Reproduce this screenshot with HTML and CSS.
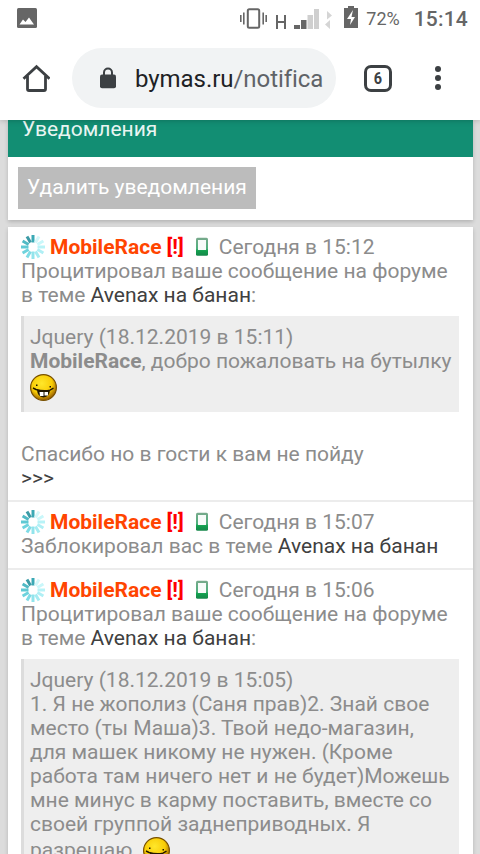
FILE: index.html
```html
<!DOCTYPE html>
<html lang="ru">
<head>
<meta charset="utf-8">
<title>Уведомления</title>
<link rel="stylesheet" href="styles.css">
</head>
<body>
<svg class="defs" width="0" height="0">
  <defs>
    <radialGradient id="face" cx=".43" cy=".34" r=".65"><stop offset="0" stop-color="#ffe72b"/><stop offset=".62" stop-color="#f9cc05"/><stop offset="1" stop-color="#9c6200"/></radialGradient>
    <linearGradient id="phoneFill" x1="0" y1="0" x2="0" y2="1"><stop offset="0" stop-color="#78a98c"/><stop offset=".6" stop-color="#4db07c"/><stop offset=".72" stop-color="#12a04e"/><stop offset="1" stop-color="#16864a"/></linearGradient>
    <symbol id="spinner" viewBox="0 0 24 24">
      <g stroke-width="3" fill="none">
        <path stroke="#3aa9b5" d="M12 0v7.500"/><path stroke="#d3f8fa" d="M18 1.600l-3.500 6"/><path stroke="#c9f7fa" d="M22.400 6l-6 3.500"/><path stroke="#b9f3f7" d="M24 12h-7.500"/><path stroke="#b0eff5" d="M22.400 18l-6-3.500"/><path stroke="#a5ebf1" d="M18 22.400l-3.500-6"/><path stroke="#92e4ec" d="M12 24v-7.500"/><path stroke="#7edbe5" d="M6 22.400l3.500-6"/><path stroke="#6ed3dd" d="M1.600 18l6-3.500"/><path stroke="#60c9d3" d="M0 12h7.500"/><path stroke="#50b9c4" d="M1.600 6l6 3.500"/><path stroke="#3c9ba6" d="M6 1.600l3.500 6"/>
      </g>
    </symbol>
    <symbol id="phone" viewBox="0 0 14 20">
      <rect x="1" y=".8" width="12" height="18" rx="1.500" fill="url(#phoneFill)"/><rect x="3" y="3" width="8" height="10" fill="#f7fbf9"/>
    </symbol>
    <symbol id="smile" viewBox="0 0 27 27">
      <circle cx="13.5" cy="13.5" r="12.9" fill="url(#face)" stroke="#785000" stroke-width="1.2"/>
      <path d="M3 14l3 1.500q7 2 14 .7l3.500-2" fill="none" stroke="#211700" stroke-width="1.400"/><path d="M7 16q7 1.500 13 0-.5 7-6.500 7.500Q7.500 23 7 16z" fill="#211700"/><path d="M9.500 18h4v4h-3.500zM14.500 18h3.500v3.500h-3.500z" fill="#fff"/><path d="M6 10.500h1.500V12H6zM19.500 12H21v1.500h-1.500z" fill="#211700"/>
    </symbol>
  </defs>
</svg>
<div class="screen">
  <header class="chrome">
    <div class="status">
      <svg class="status-icons" width="480" height="36" viewBox="0 0 480 36">
        <rect x="17" y="8" width="20" height="20" rx="1.5" fill="#666"/><path d="M19.500 24.500l3.500-5 2.500 2.500 3.500-4.500 5 7z" fill="#fff"/>
        <g fill="none" stroke="#666" stroke-width="1.6"><rect x="247.800" y="9.200" width="11.400" height="18.600" rx="1.500" stroke-width="2"/><path d="M243.800 12.500v12M240.800 15v7M263.200 12.500v12M266.200 15v7"/></g>
        <path d="M277 15v14M285 15v14M277 22h8" fill="none" stroke="#666" stroke-width="2"/>
        <path d="M294 25h6v4h-6zM301 20h5.500v9H301z" fill="#666"/><path d="M307.500 15h5.500v14h-5.500zM314 9h5v20h-5z" fill="#cfcfcf"/>
        <path d="M327 11l5 4.500h-5zM327 15.500h5l-5 4zM330 20v9l-5-4.500z" fill="#d5d5d5"/>
        <path d="M344 8h4V6h6v2h4v20h-14z" fill="#666"/><path d="M353 10l-6 9h4l-1 6 5-8h-3.500z" fill="#fff"/>
      </svg>
      <span class="battery">72%</span><span class="clock">15:14</span>
    </div>
    <div class="toolbar">
      <svg class="home" width="28" height="28" viewBox="0 0 28 28"><path d="M1.500 14.700L14.500 2.700l13 12M5.500 12v13q0 1.500 1.500 1.500h15q1.500 0 1.500-1.500V12" fill="none" stroke="#3c4043" stroke-width="2.800"/></svg>
      <div class="omnibox">
        <svg width="16" height="22" viewBox="0 0 16 22"><path d="M4 8V5.500a4 4 0 0 1 8 0V8" fill="none" stroke="#3c4043" stroke-width="2"/><rect y="7.500" width="16" height="13.700" rx="2" fill="#3c4043"/></svg>
        <span class="url">bymas.ru<span class="path">/notifica</span></span>
      </div>
      <div class="tabs"><span>6</span></div>
      <svg class="more" width="8" height="26" viewBox="0 0 8 26" fill="#3c4043"><circle cx="4" cy="4" r="3"/><circle cx="4" cy="13" r="3"/><circle cx="4" cy="22" r="3"/></svg>
    </div>
  </header>
  <main class="page">
    <section class="card">
      <h1 class="title"><span>Уведомления</span></h1>
      <div class="actions"><button class="clear">Удалить уведомления</button></div>
    </section>
    <section class="card list">
      <article class="item">
        <div class="line head"><svg class="spin"><use href="#spinner"/></svg><b class="nick">MobileRace</b><b class="mark">[!]</b><svg class="device"><use href="#phone"/></svg><span class="time">Сегодня в 15:12</span></div>
        <div class="line">Процитировал ваше сообщение на форуме</div>
        <div class="line">в теме <a>Avenax на банан</a>:</div>
        <blockquote class="quote">
          <div class="line">Jquery (18.12.2019 в 15:11)</div>
          <div class="line"><b>MobileRace</b>, добро пожаловать на бутылку</div>
          <div class="emoji-line"><svg class="smile"><use href="#smile"/></svg></div>
        </blockquote>
        <div class="reply">
          <div class="line">Спасибо но в гости к вам не пойду</div>
          <div class="line"><a>&gt;&gt;&gt;</a></div>
        </div>
      </article>
      <article class="item">
        <div class="line head"><svg class="spin"><use href="#spinner"/></svg><b class="nick">MobileRace</b><b class="mark">[!]</b><svg class="device"><use href="#phone"/></svg><span class="time">Сегодня в 15:07</span></div>
        <div class="line">Заблокировал вас в теме <a>Avenax на банан</a></div>
      </article>
      <article class="item">
        <div class="line head"><svg class="spin"><use href="#spinner"/></svg><b class="nick">MobileRace</b><b class="mark">[!]</b><svg class="device"><use href="#phone"/></svg><span class="time">Сегодня в 15:06</span></div>
        <div class="line">Процитировал ваше сообщение на форуме</div>
        <div class="line">в теме <a>Avenax на банан</a>:</div>
        <blockquote class="quote">
          <div class="line">Jquery (18.12.2019 в 15:05)</div>
          <div class="line">1. Я не жополиз (Саня прав)2. Знай свое</div>
          <div class="line">место (ты Маша)3. Твой недо-магазин,</div>
          <div class="line">для машек никому не нужен. (Кроме</div>
          <div class="line">работа там ничего нет и не будет)Можешь</div>
          <div class="line">мне минус в карму поставить, вместе со</div>
          <div class="line">своей группой заднеприводных. Я</div>
          <div class="emoji-line"><span class="last">разрешаю.</span><svg class="smile"><use href="#smile"/></svg></div>
        </blockquote>
      </article>
    </section>
  </main>
</div>
</body>
</html>
```
FILE: styles.css
```css
* { box-sizing: border-box; }
body { margin: 0; font-family: Roboto, "Liberation Sans", sans-serif; }
.defs { position: absolute; }
.screen { width: 480px; height: 854px; overflow: hidden; display: flex; flex-direction: column; background: #dcdcdc; }
.chrome { position: relative; z-index: 1; flex: none; height: 120px; background: #fff; box-shadow: 0 0 6px rgba(0,0,0,.25); }
.status { position: relative; height: 36px; display: flex; justify-content: flex-end; align-items: center; padding: 1px 12px 0 0; color: #666; white-space: nowrap; }
.status-icons { position: absolute; left: 0; top: 0; }
.battery { font-size: 18px; margin-right: 14px; }
.clock { font-size: 21px; font-weight: 500; letter-spacing: .2px; }
.toolbar { height: 84px; display: flex; align-items: center; padding-left: 22px; }
.home { margin-right: 22px; }
.omnibox { width: 264px; height: 60px; border-radius: 30px; background: #f1f3f4; display: flex; align-items: center; padding-left: 28px; }
.url { margin: 1px 0 0 19px; font-size: 24px; letter-spacing: -.05px; color: #202124; white-space: nowrap; }
.path { color: #5f6368; }
.tabs { width: 28px; height: 27px; margin-left: 28px; border: 3px solid #3c4043; border-radius: 7px; color: #3c4043; font-size: 17px; font-weight: 700; line-height: 21px; text-align: center; }
.tabs span { display: block; transform: scaleX(.85); }
.more { margin-left: 42px; }
.page { padding: 0 7px 0 8px; }
.card { background: #fff; box-shadow: 0 2px 4px rgba(0,0,0,.18); }
.title { margin: 0; height: 37px; padding: 0 14px; background: #128e73; color: #e9f5f2; font-size: 21px; font-weight: 400; line-height: 24px; white-space: nowrap; }
.title span { display: block; transform: translateY(-3px); }
.actions { height: 63px; padding: 10px; }
.clear { display: block; width: 238px; height: 42px; padding: 0 0 2px; border: 0; background: #bcbcbc; color: #fff; font: 21px/40px Roboto, sans-serif; white-space: nowrap; }
.list { margin-top: 7px; color: #8c8c8c; font-size: 21px; }
.item { padding: 8px 14px 10px 13px; border-bottom: 2px solid #ececec; }
.line { height: 24px; line-height: 24px; white-space: nowrap; }
.head { display: flex; align-items: center; }
.spin { width: 24px; height: 24px; margin-right: 5px; flex: none; }
.nick { color: #ff4500; }
.mark { color: #f00; margin-left: 5px; }
.device { width: 14px; height: 20px; margin: 0 10px 0 11px; flex: none; }
.item a { color: #404040; }
.quote { margin: 9px 0 0; padding: 9px 0 9px 6px; background: #eee; border-left: 3px solid #dcdcdc; }
.emoji-line { height: 30px; padding-bottom: 2px; display: flex; align-items: center; }
.smile { width: 27px; height: 27px; flex: none; }
.last { margin-right: 5px; line-height: 24px; }
.reply { margin-top: 30px; }
```
